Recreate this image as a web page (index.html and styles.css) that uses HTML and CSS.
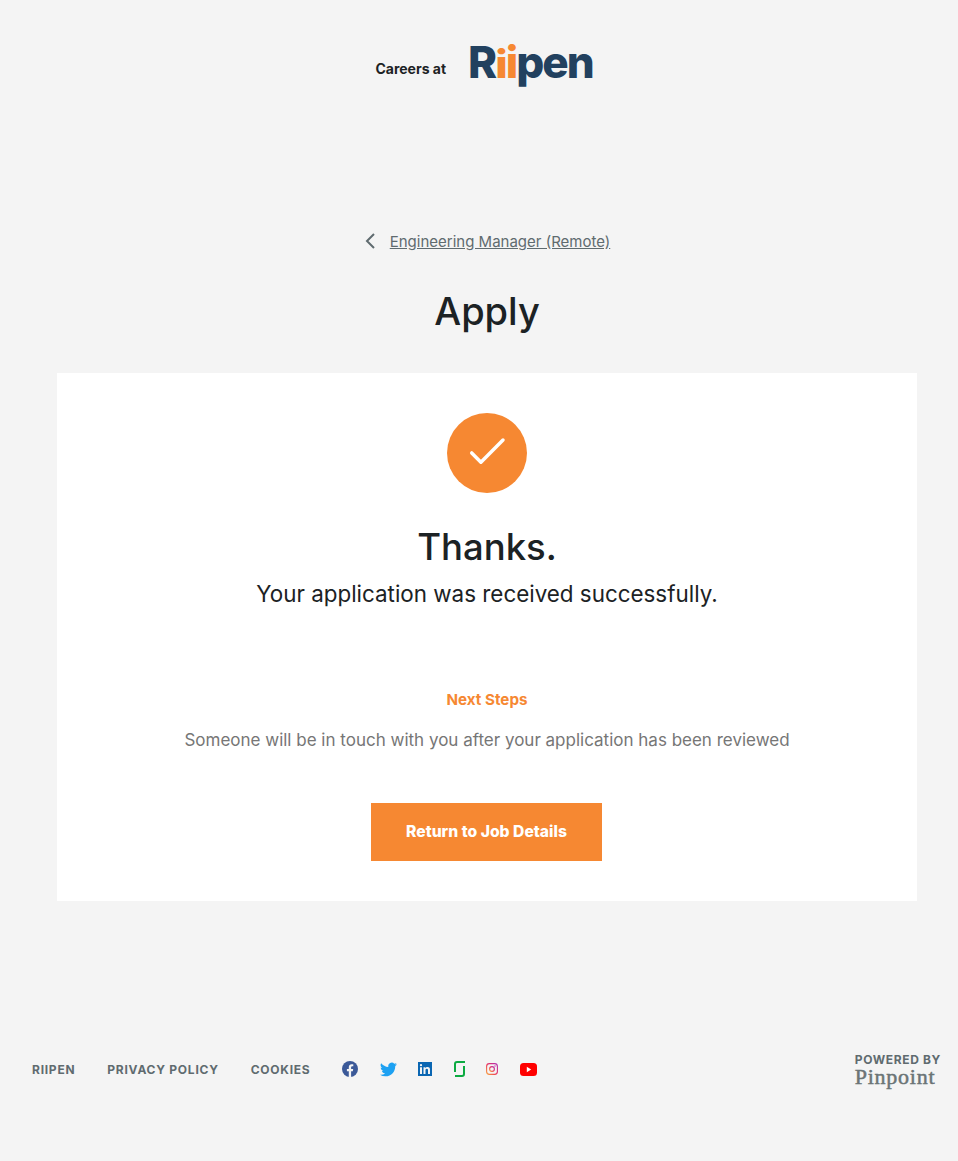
FILE: index.html
```html
<!DOCTYPE html>
<html lang="en">
<head>
<meta charset="utf-8">
<title>Apply - Riipen</title>
<link rel="stylesheet" href="styles.css">
</head>
<body>
<header class="site-header">
  <span class="careers">Careers at</span>
  <a class="logo" href="#">R<span class="logo-i logo-i-low">i</span><span class="logo-i">i</span>pen</a>
</header>
<main class="main">
  <a class="back" href="#">
    <svg class="back-icon" viewBox="0 0 12 18" width="12" height="18"><path d="M10 2 3 9l7 7" fill="none" stroke="#5f6b6f" stroke-width="2"/></svg>
    <span class="back-text">Engineering Manager (Remote)</span>
  </a>
  <h1 class="title">Apply</h1>
  <section class="card">
    <div class="check">
      <svg viewBox="0 0 40 40" width="40" height="40"><path d="M3.500 19.500 13.500 29.500 37.500 5.500" transform="translate(1.500 2) scale(.92)" fill="none" stroke="#fff" stroke-width="3.800" stroke-linecap="round" stroke-linejoin="round"/></svg>
    </div>
    <h2 class="thanks">Thanks.</h2>
    <p class="received">Your application was received successfully.</p>
    <h3 class="next">Next Steps</h3>
    <p class="someone">Someone will be in touch with you after your application has been reviewed</p>
    <a class="button" href="#">Return to Job Details</a>
  </section>
</main>
<footer class="footer">
  <nav class="foot-links">
    <a href="#">RIIPEN</a>
    <a href="#">PRIVACY POLICY</a>
    <a href="#">COOKIES</a>
  </nav>
  <div class="socials">
    <svg class="soc soc-fb" viewBox="0 0 16 16" width="16" height="16"><circle cx="8" cy="8" r="8" fill="#3b5998"/><path d="M6.800 16V10.300H4.900V8h1.900V6.300c0-2 1.200-3 2.900-3 .8 0 1.600.1 1.600.1v1.900h-.9c-1 0-1.300.6-1.300 1.200V8h2.100l-.4 2.300H9.100V16z" fill="#f4f4f4"/></svg>
    <svg class="soc soc-tw" viewBox="0 0 24 24" width="17" height="17"><path d="M23.900 4.600c-.9.400-1.800.7-2.800.8 1-.6 1.800-1.600 2.200-2.700-1 .6-2 1-3.100 1.200a4.900 4.900 0 0 0-8.400 4.500C7.700 8.100 4.100 6.100 1.700 3.100a4.900 4.900 0 0 0 1.500 6.600c-.8 0-1.600-.2-2.200-.6v.1c0 2.400 1.700 4.400 3.900 4.800-.7.200-1.500.2-2.200.1.600 2 2.400 3.400 4.600 3.400A9.900 9.900 0 0 1 0 19.500 13.900 13.900 0 0 0 7.500 21.700c9.100 0 14-7.500 14-14v-.6c1-.7 1.800-1.600 2.400-2.500z" fill="#1da1f2"/></svg>
    <svg class="soc soc-li" viewBox="0 0 14 14" width="14" height="14"><rect width="14" height="14" fill="#0a66b2"/><path d="M2 5.300h2V12H2zM3 2a1.100 1.100 0 1 1 0 2.300A1.100 1.100 0 0 1 3 2zM5.500 5.300h1.900v.9c.4-.6 1.100-1.100 2.100-1.100 2 0 2.500 1.300 2.500 3V12h-2V8.600c0-.8 0-1.800-1.200-1.800s-1.300.9-1.300 1.800V12h-2z" fill="#f4f4f4"/></svg>
    <svg class="soc soc-gd" viewBox="0 0 12 16" width="12" height="16"><path d="M1 11V3Q1 1 3 1H11M10 5V13Q10 15 8 15H1" fill="none" stroke="#0caa41" stroke-width="2"/></svg>
    <svg class="soc soc-ig" viewBox="0 0 12 12" width="12" height="12"><defs><linearGradient id="ig" x1="0" y1="1" x2="1" y2="0"><stop offset="0" stop-color="#f9a13a"/><stop offset=".5" stop-color="#e8305e"/><stop offset="1" stop-color="#b12fb5"/></linearGradient></defs><rect x=".6" y=".6" width="10.800" height="10.800" rx="2.800" fill="none" stroke="url(#ig)" stroke-width="1.100"/><circle cx="6" cy="6" r="2.400" fill="none" stroke="url(#ig)" stroke-width="1.100"/><circle cx="9" cy="3" r=".7" fill="#c22f9d"/></svg>
    <svg class="soc soc-yt" viewBox="0 0 17 13" width="17" height="13"><rect width="17" height="13" y="0" rx="3.500" fill="#f00"/><path d="M6.800 3.800v5.400L11.200 6.500z" fill="#fff"/></svg>
  </div>
  <a class="powered" href="#">
    <span class="powered-by">POWERED BY</span>
    <span class="pinpoint">Pinpoint</span>
  </a>
</footer>
</body>
</html>
```
FILE: styles.css
```css
* { box-sizing: border-box; }
html, body { margin: 0; padding: 0; }
body {
  background: #f4f4f4;
  color: #1c2224;
  font-family: Inter, "Liberation Sans", sans-serif;
  height: 1161px;
  overflow: hidden;
}
a { color: inherit; text-decoration: none; }
h1, h2, h3, p { margin: 0; font-weight: 400; }

.site-header {
  display: flex;
  align-items: center;
  justify-content: center;
  gap: 22px;
  height: 128px;
  margin-left: 10px;
}
.careers {
  font-size: 14px;
  font-weight: 700;
  color: #1c2224;
  margin-top: 9px;
}
.logo {
  font-size: 44px;
  font-weight: 800;
  color: #22415f;
  letter-spacing: -2px;
  line-height: 1;
  margin-top: -4px;
}
.logo-i {
  color: #f68832;
  display: inline-block;
  transform-origin: 50% 82%;
}
.logo-i-low { transform: scaleY(.87); }

.main {
  padding: 0 41px 0 57px;
  display: flex;
  flex-direction: column;
  align-items: center;
}
.back {
  display: flex;
  align-items: center;
  gap: 14px;
  height: 20px;
  margin-top: 103px;
  color: #5f6b6f;
}
.back-text {
  font-size: 15px;
  text-decoration: underline;
}
.title {
  font-size: 38px;
  font-weight: 500;
  line-height: 46px;
  margin-top: 37px;
}
.card {
  width: 860px;
  height: 528px;
  margin-top: 39px;
  background: #fff;
  display: flex;
  flex-direction: column;
  align-items: center;
  padding-top: 40px;
}
.check {
  width: 80px;
  height: 80px;
  border-radius: 50%;
  background: #f68832;
  display: flex;
  align-items: center;
  justify-content: center;
}
.thanks {
  font-size: 36.500px;
  font-weight: 500;
  line-height: 46px;
  margin-top: 31px;
}
.received {
  font-size: 22.400px;
  line-height: 30px;
  margin-top: 9px;
}
.next {
  font-size: 15.200px;
  font-weight: 700;
  line-height: 20px;
  margin-top: 81px;
  color: #f68832;
}
.someone {
  font-size: 17px;
  line-height: 24px;
  margin-top: 18px;
  color: #767676;
}
.button {
  display: flex;
  align-items: center;
  justify-content: center;
  width: 231px;
  height: 58px;
  margin: 51px 1px 0 0;
  padding-bottom: 2px;
  background: #f68832;
  color: #fff;
  font-size: 15.700px;
  font-weight: 800;
}

.footer {
  display: flex;
  align-items: center;
  height: 40px;
  margin-top: 148px;
  padding: 0 17px 0 32px;
}
.foot-links {
  display: flex;
  gap: 32px;
  font-size: 12px;
  font-weight: 700;
  letter-spacing: .75px;
  color: #5f6b6f;
}
.socials {
  display: flex;
  align-items: center;
  margin-left: 32px;
}
.soc { display: block; }
.soc-tw { margin-left: 22px; }
.soc-li { margin-left: 21px; }
.soc-gd { margin-left: 22px; }
.soc-ig { margin-left: 20px; }
.soc-yt { margin-left: 22px; }
.powered {
  margin-left: auto;
  padding-top: 3px;
  display: flex;
  flex-direction: column;
  color: #5f6b6f;
}
.powered-by {
  font-size: 12px;
  font-weight: 700;
  letter-spacing: .64px;
  line-height: 13px;
}
.pinpoint {
  font-family: "Liberation Serif", serif;
  font-size: 22px;
  line-height: 22px;
  letter-spacing: .75px;
  color: #6b7476;
  -webkit-text-stroke: .5px #6b7476;
}
```
